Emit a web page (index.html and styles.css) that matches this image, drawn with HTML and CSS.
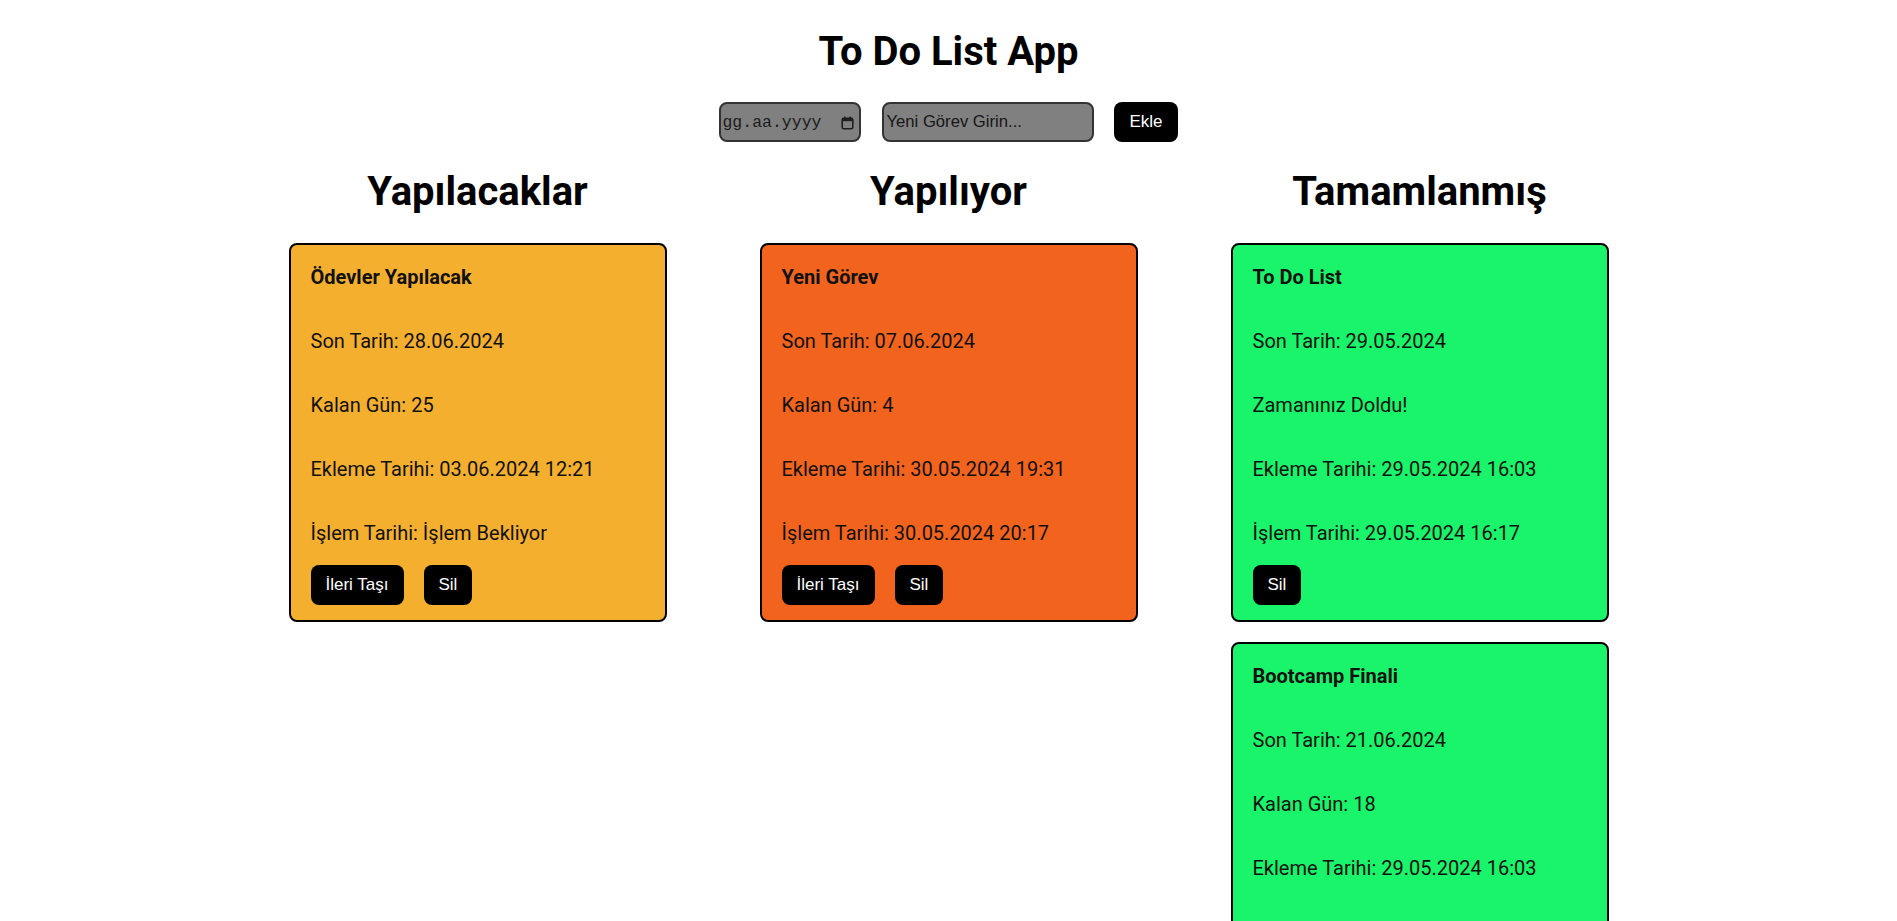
FILE: index.html
```html
<!DOCTYPE html>
<html lang="tr">
<head>
<meta charset="utf-8">
<title>To Do List App</title>
<link rel="stylesheet" href="styles.css">
</head>
<body>
<div class="app">
  <h1 class="app-title">To Do List App</h1>
  <form class="task-form" onsubmit="return false;">
    <div class="date-field">
      <span class="date-placeholder">gg.aa.yyyy</span>
      <svg class="cal-icon" width="13" height="14" viewBox="0 0 13 14" aria-hidden="true">
        <rect x="1.2" y="2.2" width="10.6" height="10.6" rx="1.6" fill="none" stroke="#1e1e1e" stroke-width="1.6"/>
        <rect x="1.2" y="2.2" width="10.6" height="3" fill="#1e1e1e"/>
        <rect x="3" y="0.5" width="1.6" height="3" fill="#1e1e1e"/>
        <rect x="8.4" y="0.5" width="1.6" height="3" fill="#1e1e1e"/>
      </svg>
    </div>
    <input class="text-field" type="text" placeholder="Yeni Görev Girin...">
    <button class="btn btn-add" type="button">Ekle</button>
  </form>

  <div class="board">
    <section class="column">
      <h2 class="column-title">Yapılacaklar</h2>
      <div class="card card-todo">
        <p class="card-line card-name">Ödevler Yapılacak</p>
        <p class="card-line">Son Tarih: 28.06.2024</p>
        <p class="card-line">Kalan Gün: 25</p>
        <p class="card-line">Ekleme Tarihi: 03.06.2024 12:21</p>
        <p class="card-line">İşlem Tarihi: İşlem Bekliyor</p>
        <div class="card-actions">
          <button class="btn" type="button">İleri Taşı</button>
          <button class="btn" type="button">Sil</button>
        </div>
      </div>
    </section>

    <section class="column">
      <h2 class="column-title">Yapılıyor</h2>
      <div class="card card-doing">
        <p class="card-line card-name">Yeni Görev</p>
        <p class="card-line">Son Tarih: 07.06.2024</p>
        <p class="card-line">Kalan Gün: 4</p>
        <p class="card-line">Ekleme Tarihi: 30.05.2024 19:31</p>
        <p class="card-line">İşlem Tarihi: 30.05.2024 20:17</p>
        <div class="card-actions">
          <button class="btn" type="button">İleri Taşı</button>
          <button class="btn" type="button">Sil</button>
        </div>
      </div>
    </section>

    <section class="column">
      <h2 class="column-title">Tamamlanmış</h2>
      <div class="card card-done">
        <p class="card-line card-name">To Do List</p>
        <p class="card-line">Son Tarih: 29.05.2024</p>
        <p class="card-line">Zamanınız Doldu!</p>
        <p class="card-line">Ekleme Tarihi: 29.05.2024 16:03</p>
        <p class="card-line">İşlem Tarihi: 29.05.2024 16:17</p>
        <div class="card-actions">
          <button class="btn" type="button">Sil</button>
        </div>
      </div>
      <div class="card card-done">
        <p class="card-line card-name">Bootcamp Finali</p>
        <p class="card-line">Son Tarih: 21.06.2024</p>
        <p class="card-line">Kalan Gün: 18</p>
        <p class="card-line">Ekleme Tarihi: 29.05.2024 16:03</p>
        <p class="card-line">İşlem Tarihi: 29.05.2024 16:20</p>
        <div class="card-actions">
          <button class="btn" type="button">Sil</button>
        </div>
      </div>
    </section>
  </div>
</div>
</body>
</html>
```
FILE: styles.css
```css
html, body {
  margin: 0;
  padding: 0;
  background: #ffffff;
  color: #000000;
}

body {
  font-family: Roboto, "Liberation Sans", Arial, sans-serif;
  overflow-x: hidden;
}

.app {
  padding-top: 28px;
  display: flex;
  flex-direction: column;
  align-items: center;
}

.app-title {
  margin: 0;
  font-size: 40px;
  font-weight: 700;
  line-height: normal;
  text-align: center;
}

.task-form {
  margin-top: 27px;
  display: flex;
  justify-content: center;
  align-items: stretch;
  gap: 20px;
  height: 40px;
}

.date-field {
  box-sizing: border-box;
  width: 142px;
  height: 40px;
  display: flex;
  align-items: center;
  justify-content: space-between;
  padding: 0 5px 0 1px;
  background: #808080;
  border: 2px solid #333333;
  border-radius: 8px;
}

.date-placeholder {
  font-family: "Liberation Mono", "DejaVu Sans Mono", monospace;
  font-size: 16.5px;
  color: #1a1a1a;
}

.cal-icon {
  display: block;
  margin-top: 1px;
}

.text-field {
  box-sizing: border-box;
  width: 212px;
  height: 40px;
  margin: 0 0 0 1px;
  padding: 0 2px;
  background: #808080;
  border: 2px solid #333333;
  border-radius: 8px;
  font-family: "Liberation Sans", Arial, sans-serif;
  font-size: 16.67px;
  color: #111111;
  outline: none;
}

.text-field::placeholder {
  color: #161616;
  opacity: 1;
}

.btn {
  font-family: "Liberation Sans", Arial, sans-serif;
  font-size: 17px;
  line-height: normal;
  color: #ffffff;
  background: #000000;
  border: none;
  border-radius: 8px;
  padding: 10px 15px;
  cursor: pointer;
}

.btn-add {
  height: 40px;
  padding: 0 15px;
}

.board {
  margin-top: 26px;
  display: grid;
  grid-template-columns: repeat(3, 471px);
  justify-content: center;
  align-items: start;
}

.column {
  display: flex;
  flex-direction: column;
  align-items: center;
  gap: 20px;
}

.column-title {
  margin: 0 0 8px;
  font-size: 40px;
  font-weight: 700;
  line-height: normal;
  text-align: center;
}

.card {
  box-sizing: border-box;
  width: 378px;
  padding: 20px 20px 15px;
  border: 2px solid #000000;
  border-radius: 8px;
}

.card-todo { background: #f5af2f; }
.card-doing { background: #f2641e; }
.card-done { background: #19f46a; }

.card-line {
  margin: 0;
  font-size: 20px;
  line-height: 24px;
  color: #111111;
}

.card-line + .card-line {
  margin-top: 40px;
}

.card-name {
  font-weight: 700;
}

.card-actions {
  margin-top: 20px;
  display: flex;
  gap: 20px;
}
```
